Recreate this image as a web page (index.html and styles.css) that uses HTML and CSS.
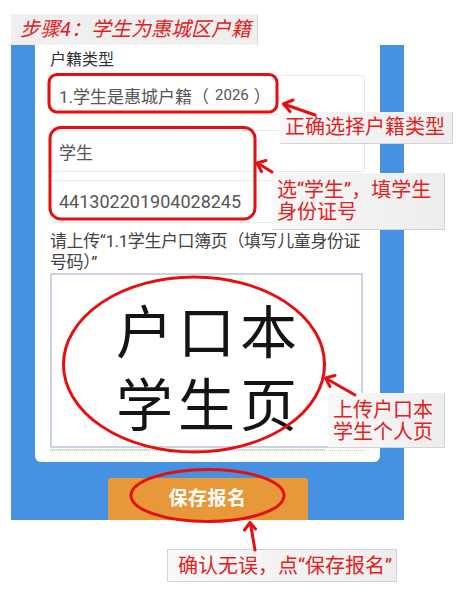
FILE: index.html
```html
<!DOCTYPE html>
<html lang="zh-CN">
<head>
<meta charset="utf-8">
<title>步骤4：学生为惠城区户籍</title>
<link rel="stylesheet" href="styles.css">
</head>
<body>
<div class="page">
  <div class="title">步骤4：学生为惠城区户籍</div>
  <div class="panel">
    <div class="card">
      <div class="label">户籍类型</div>
      <div class="field first">1.学生是惠城户籍<span class="paren">（</span><span class="year">2026</span><span class="paren">）</span></div>
      <div class="field second">学生</div>
      <div class="field third">441302201904028245</div>
      <div class="question">请上传“1.1学生户口簿页（填写儿童身份证号码）”</div>
      <div class="photo">
        <div class="photo-text">户口本<br>学生页</div>
      </div>
      <div class="progress"><div class="progress-bar"></div></div>
    </div>
    <div class="actions">
      <div class="save">保存报名</div>
    </div>
  </div>

  <svg class="marks" width="464" height="599" viewBox="0 0 464 599">
    <g fill="none" stroke="#e60f0f" stroke-width="3" stroke-linecap="round" stroke-linejoin="round">
      <rect x="49" y="74.5" width="228" height="37.5" rx="8"/>
      <rect x="50" y="127.5" width="205" height="91.5" rx="11"/>
      <ellipse cx="194" cy="364.5" rx="130.5" ry="87.5"/>
      <ellipse cx="207.5" cy="495.5" rx="76.5" ry="26"/>
      <line x1="315" y1="115" x2="285" y2="104.5"/>
      <polyline points="293,100 283.5,104 290,111.5"/>
      <line x1="272" y1="172" x2="259" y2="164"/>
      <polyline points="266,160.5 257,163 261.5,171.5"/>
      <line x1="355" y1="395" x2="327" y2="379"/>
      <polyline points="335,375.5 325.5,378 330,386.5"/>
      <line x1="255" y1="550" x2="250.5" y2="524"/>
      <polyline points="244.5,530 250,522.5 255.5,529"/>
    </g>
  </svg>

  <div class="note note-type">正确选择户籍类型</div>
  <div class="note note-id">选“学生”，填学生<br>身份证号</div>
  <div class="note note-upload">上传户口本<br>学生个人页</div>
  <div class="note note-save">确认无误，点“保存报名”</div>
</div>
</body>
</html>
```

FILE: styles.css
```css
* {
  box-sizing: border-box;
}

html, body {
  margin: 0;
  padding: 0;
  background: #ffffff;
}

.page {
  position: relative;
  width: 464px;
  height: 599px;
  padding-top: 14px;
  font-family: Roboto, "Noto Sans CJK SC", sans-serif;
  overflow: hidden;
}

.title {
  margin-left: 11px;
  width: 247px;
  height: 31px;
  background: #efefef;
  border-right: 1px solid #dcdcdc;
  color: #e3211c;
  font-size: 20px;
  font-style: italic;
  font-weight: 400;
  line-height: 31px;
  padding-left: 9px;
  white-space: nowrap;
}

.panel {
  margin-left: 11px;
  width: 393px;
  background: #4691e1;
  padding: 0 24px;
}

.card {
  background: #ffffff;
  border-radius: 0 0 6px 6px;
  padding: 4px 15px 11px;
  display: flex;
  flex-direction: column;
}

.label {
  font-size: 16px;
  line-height: 22px;
  color: #333333;
  margin-bottom: 4px;
}

.field {
  border: 1px solid #e8e8e8;
  border-radius: 3px;
  color: #555555;
  font-size: 17px;
  padding-left: 8px;
  display: flex;
  align-items: center;
}

.field.first {
  height: 40px;
}

.field.second {
  height: 42px;
  margin-top: 15px;
}

.field.third {
  height: 43px;
  margin-top: 8px;
  font-size: 18px;
}

.paren {
  font-size: 17px;
}

.year {
  font-size: 15px;
  margin: 0 5px 0 6px;
}

.question {
  margin-top: 8px;
  font-size: 17px;
  line-height: 21px;
  letter-spacing: -0.4px;
  color: #444444;
}

.photo {
  width: 313px;
  height: 175px;
  border: 2px solid #cbd3e3;
  display: flex;
  align-items: center;
  justify-content: center;
  padding-top: 8px;
}

.photo-text {
  font-family: "Noto Sans CJK SC", sans-serif;
  font-size: 57px;
  line-height: 73px;
  letter-spacing: 5px;
  color: #141414;
  text-align: center;
  padding-left: 5px;
}

.progress {
  margin-top: 1px;
  height: 2px;
  border-bottom: 1px dotted #b8c4d8;
}

.progress-bar {
  width: 275px;
  height: 1px;
  background: #d6dbe6;
}

.actions {
  padding: 16px 0 0;
  display: flex;
  justify-content: center;
}

.save {
  width: 200px;
  height: 42px;
  border-radius: 3px 3px 0 0;
  background: #e7993a;
  color: #ffffff;
  font-weight: 700;
  font-size: 19px;
  line-height: 42px;
  text-align: center;
  letter-spacing: 0.5px;
}

.marks {
  position: absolute;
  left: 0;
  top: 0;
  pointer-events: none;
  z-index: 2;
}

.note {
  position: absolute;
  z-index: 1;
  background: linear-gradient(to right, #f8f8f8, #ededed);
  border-right: 1px solid #d4d4d4;
  border-bottom: 1px solid #d4d4d4;
  color: #e3211c;
  font-family: Roboto, "Noto Sans CJK SC", sans-serif;
  font-size: 20px;
  white-space: nowrap;
}

.note-type {
  left: 280px;
  top: 112px;
  width: 173px;
  height: 32px;
  line-height: 31px;
  padding-left: 5px;
}

.note-id {
  left: 272px;
  top: 173px;
  width: 173px;
  height: 57px;
  line-height: 22px;
  padding: 6px 0 0 5px;
}

.note-upload {
  left: 328px;
  top: 393px;
  width: 117px;
  height: 55px;
  line-height: 22px;
  padding: 6px 0 0 5px;
}

.note-save {
  left: 167px;
  top: 549px;
  width: 230px;
  height: 33px;
  line-height: 32px;
  padding-left: 10px;
  border-left: 1px solid #d4d4d4;
  border-top: 1px solid #d4d4d4;
}
```
